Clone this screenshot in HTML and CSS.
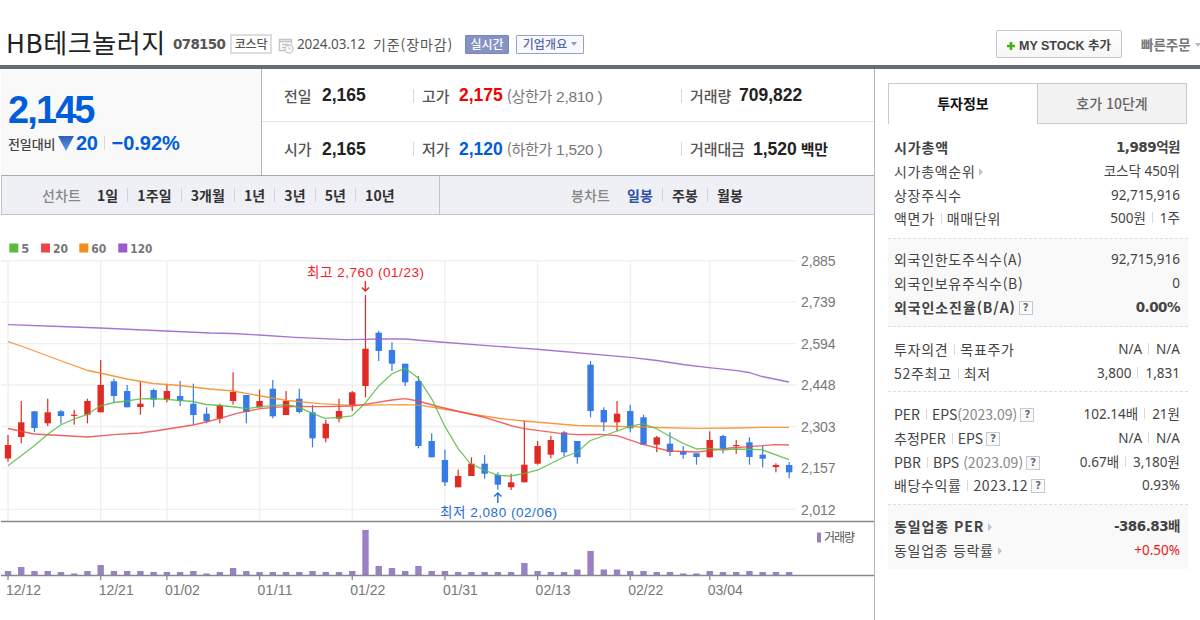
FILE: index.html
```html
<!DOCTYPE html>
<html lang="ko">
<head>
    <meta charset="UTF-8">
    <meta name="viewport" content="width=device-width, initial-scale=1.0">
    <title>HB테크놀러지 : 증권</title>
    <link rel="stylesheet" href="styles.css">
</head>
<body>
    <header>
        <h1>HB테크놀러지</h1>
        <span class="code">078150</span>
        <span class="market">코스닥</span>
        <svg class="time-icon" width="16" height="16" viewBox="0 0 16 16" fill="none" stroke="#c4c4c4">
            <path d="M13.5 6V1.5H1.5v11H7M1.5 3.5h12M4 6.5h6M4 9.5h3" stroke-width="1.4"/>
            <circle cx="11" cy="11" r="4" fill="#fff" stroke-width="1.3"/>
            <path d="M11 8.5V11h2"/>
        </svg>
        <span class="date">2024.03.12</span>
        <span class="basis">기준(장마감)</span>
        <span class="tag realtime">실시간</span>
        <span class="tag outline">기업개요<i class="caret"></i></span>
        <button class="my-stock"><svg width="8" height="8" viewBox="0 0 8 8"><path d="M4 0v8M0 4h8" stroke="#3cb512" stroke-width="2.6"/></svg>MY STOCK 추가</button>
        <a class="quick">빠른주문<i class="caret"></i></a>
    </header>
    <main>
        <section class="left">
            <div class="summary">
                <div class="today">
                    <strong class="price">2,145</strong>
                    <div class="change">
                        <span class="label">전일대비</span>
                        <svg width="16" height="15" viewBox="0 0 16 15">
                            <defs><linearGradient id="down" x2="0" y2="1"><stop offset="0" stop-color="#2e5fae"/><stop offset="1" stop-color="#5b9bea"/></linearGradient></defs>
                            <path d="M0 0h16L8 15z" fill="url(#down)"/>
                        </svg>
                        <b class="diff">20</b><i class="bar"></i><b class="rate">−0.92%</b>
                    </div>
                </div>
                <div class="quotes">
                    <div class="quote-row">
                        <div class="cell"><span class="label">전일</span><b>2,165</b></div>
                        <div class="cell"><i class="bar"></i><span class="label">고가</span><b class="up">2,175</b><span class="limit"><em>(상한가</em> 2,810 )</span></div>
                        <div class="cell"><i class="bar"></i><span class="label vol">거래량</span><b>709,822</b></div>
                    </div>
                    <div class="quote-row">
                        <div class="cell"><span class="label">시가</span><b>2,165</b></div>
                        <div class="cell"><i class="bar"></i><span class="label">저가</span><b class="down">2,120</b><span class="limit"><em>(하한가</em> 1,520 )</span></div>
                        <div class="cell"><i class="bar"></i><span class="label amt">거래대금</span><b>1,520</b><span class="unit">백만</span></div>
                    </div>
                </div>
            </div>
            <nav class="toolbar">
                <div class="line-tabs">
                    <span class="kind">선차트</span>
                    <a>1일</a><a>1주일</a><a>3개월</a><a>1년</a><a>3년</a><a>5년</a><a>10년</a>
                </div>
                <div class="candle-tabs">
                    <span class="kind">봉차트</span>
                    <a class="on">일봉</a><a>주봉</a><a>월봉</a>
                </div>
            </nav>
            <svg id="chart" width="873" height="405" viewBox="1 215 873 405"></svg>
        </section>
        <aside>
            <div class="tabs">
                <a class="tab active">투자정보</a>
                <a class="tab">호가 10단계</a>
            </div>
            <div class="info first">
                <div class="row strong"><span class="name">시가총액</span><span>1,989억원</span></div>
                <div class="row"><span class="name">시가총액순위<i class="arrow"></i></span><span>코스닥 450위</span></div>
                <div class="row"><span class="name">상장주식수</span><span>92,715,916</span></div>
                <div class="row"><span class="name">액면가<i class="bar"></i>매매단위</span><span>500원<i class="bar"></i>1주</span></div>
            </div>
            <div class="info shade foreign">
                <div class="row"><span class="name">외국인한도주식수(A)</span><span>92,715,916</span></div>
                <div class="row"><span class="name">외국인보유주식수(B)</span><span>0</span></div>
                <div class="row strong"><span class="name">외국인소진율(B/A)<i class="help">?</i></span><span>0.00%</span></div>
            </div>
            <div class="info opinion">
                <div class="row"><span class="name">투자의견<i class="bar"></i>목표주가</span><span>N/A<i class="bar"></i>N/A</span></div>
                <div class="row"><span class="name">52주최고<i class="bar"></i>최저</span><span>3,800<i class="bar"></i>1,831</span></div>
            </div>
            <div class="info ratio">
                <div class="row"><span class="name">PER<i class="bar"></i>EPS<em>(2023.09)</em><i class="help">?</i></span><span>102.14배<i class="bar"></i>21원</span></div>
                <div class="row"><span class="name">추정PER<i class="bar"></i>EPS<i class="help">?</i></span><span>N/A<i class="bar"></i>N/A</span></div>
                <div class="row"><span class="name">PBR<i class="bar"></i>BPS <em>(2023.09)</em><i class="help">?</i></span><span>0.67배<i class="bar"></i>3,180원</span></div>
                <div class="row"><span class="name wide">배당수익률<i class="bar"></i>2023.12<i class="help">?</i></span><span>0.93%</span></div>
            </div>
            <div class="info shade industry">
                <div class="row strong"><span class="name">동일업종 PER<i class="arrow"></i></span><span>-386.83배</span></div>
                <div class="row"><span class="name">동일업종 등락률<i class="arrow"></i></span><span class="red">+0.50%</span></div>
            </div>
        </aside>
    </main>
    <script src="chart.js"></script>
</body>
</html>
```
FILE: styles.css
```css
* {
    box-sizing: border-box;
}

body {
    width: 1200px;
    height: 620px;
    margin: 0;
    overflow: hidden;
    background: #fff;
    color: #444;
    font-family: "Noto Sans", "Noto Sans CJK KR", sans-serif;
    font-size: 13px;
}

i, em {
    font-style: normal;
}

header {
    display: flex;
    align-items: center;
    height: 69px;
    padding: 23px 0 0 6px;
    border-bottom: 4px solid #666c75;
    white-space: nowrap;
}

h1 {
    width: 167px;
    margin: -4px 0 0;
    color: #222;
    font: 400 26px/40px "Noto Sans CJK KR", sans-serif;
    letter-spacing: 0.6px;
}

.code {
    width: 57px;
    color: #555;
    font: bold 13.5px "DejaVu Sans", sans-serif;
    letter-spacing: -0.7px;
}

.market {
    width: 42px;
    height: 20px;
    border: 2px solid #ddd;
    color: #555;
    font: 500 12px/15px "Noto Sans CJK KR", sans-serif;
    letter-spacing: -0.2px;
    text-align: center;
}

.time-icon {
    margin: 4px 3px 0 6px;
}

.date {
    width: 76px;
    font-size: 13.5px;
    color: #555;
    letter-spacing: -0.1px;
}

.basis {
    width: 92px;
    font: 14px "Noto Sans CJK KR", sans-serif;
    color: #555;
    letter-spacing: 0.9px;
}

.tag {
    height: 19px;
    border: 1px solid #7787bb;
    border-radius: 1px;
    font: 500 12px/16px "Noto Sans CJK KR", sans-serif;
    text-align: center;
}

.realtime {
    width: 44px;
    margin-right: 7px;
    background: #8592c3;
    color: #fff;
}

.outline {
    width: 68px;
    background: #f8f9ff;
    border: 1px solid #94a1cc;
    color: #5468ac;
    letter-spacing: 0.1px;
}

.caret {
    display: inline-block;
    margin-left: 4px;
    border: 3.5px solid transparent;
    border-top: 4px solid #8e9ccd;
    border-bottom: 0;
    vertical-align: 3px;
}

.my-stock {
    width: 126px;
    height: 28px;
    margin: 0 19px 0 auto;
    padding: 0;
    border: 1px solid #c6c6c6;
    border-radius: 2px;
    background: linear-gradient(#fff, #f6f6f6);
    color: #444;
    font: bold 12.5px "Liberation Sans", "Noto Sans CJK KR", sans-serif;
    letter-spacing: 0;
}

.my-stock svg {
    margin-right: 4px;
}

.quick {
    width: 59px;
    color: #777;
    font: bold 13.5px "Noto Sans CJK KR", sans-serif;
    letter-spacing: 0;
}

.quick .caret {
    border-top-color: #bbb;
    margin-left: 4px;
}

main {
    display: flex;
    height: 551px;
    padding-left: 1px;
}

.left {
    width: 874px;
    border-right: 1px solid #b5b5b5;
}

.summary {
    display: flex;
    height: 106px;
}

.today {
    width: 261px;
    padding: 20px 0 0 7px;
    background: #f9f9f9;
    border-right: 1px solid #b5b5b5;
}

.price {
    display: block;
    height: 42px;
    color: #005ddc;
    font: bold 38px/42px "Liberation Sans", sans-serif;
    letter-spacing: -1.9px;
}

.change {
    display: flex;
    align-items: center;
    height: 24px;
    color: #005ddc;
    font: bold 20px/24px "Liberation Sans", sans-serif;
    letter-spacing: 0;
}

.change .label {
    width: 50px;
    color: #444;
    font: 500 13px "Noto Sans CJK KR", sans-serif;
    letter-spacing: -0.1px;
}

.change .diff {
    margin-left: 2px;
    letter-spacing: -0.4px;
}

.change .bar {
    margin: 0 6px 0 7px;
}

.bar {
    display: inline-block;
    flex: none;
    width: 1px;
    height: 14px;
    background: #d9d9d9;
}

.quotes {
    flex: 1;
}

.quote-row {
    display: grid;
    grid-template-columns: 129px 268px 1fr;
    height: 53px;
    padding: 1px 0 0 22px;
    border-bottom: 1px solid #e5e5e5;
}

.quote-row:last-child {
    border-bottom: 0;
}

.cell {
    display: flex;
    align-items: center;
    color: #222;
    font: bold 17.5px "Liberation Sans", sans-serif;
    white-space: nowrap;
}

.cell .bar {
    margin-right: 8px;
}

.cell .label {
    width: 37px;
    color: #555;
    font: 500 15px/20px "Noto Sans CJK KR", sans-serif;
    letter-spacing: -0.1px;
}

.cell:first-child .label {
    width: 38px;
}

.cell .vol {
    width: 49px;
}

.cell .amt {
    width: 63px;
}

.up {
    color: #f30000;
}

.down {
    color: #005ddc;
}

.cell .limit {
    margin-left: 4px;
    color: #777;
    font: 15.5px "Liberation Sans", "Noto Sans CJK KR", sans-serif;
    letter-spacing: -0.3px;
}

.limit em {
    font: 15px/20px "Noto Sans CJK KR", sans-serif;
    letter-spacing: -0.3px;
}

.unit {
    margin-left: 4px;
    font: bold 15px/20px "Noto Sans CJK KR", sans-serif;
    letter-spacing: -0.3px;
}

.toolbar {
    display: flex;
    height: 40px;
    border: 1px solid #c4c4c8;
    border-top-color: #a9a9a9;
    border-right: 0;
    background: #eff0f5;
    color: #333;
    font: bold 14px/38px "Noto Sans CJK KR", sans-serif;
    letter-spacing: 0.1px;
}

.line-tabs, .candle-tabs {
    display: flex;
    align-items: center;
}

.line-tabs {
    width: 438px;
    padding-left: 40px;
    border-right: 1px solid #c4c4c8;
}

.candle-tabs {
    padding-left: 131px;
}

.kind {
    width: 46px;
    color: #888;
    font-weight: 500;
}

.toolbar a {
    display: flex;
    align-items: center;
    padding: 0 9px;
}

.toolbar a + a::before {
    content: "";
    width: 1px;
    height: 14px;
    margin: 0 9px 0 -9px;
    background: #d0d2d9;
}

.toolbar .on {
    color: #3150a8;
}

.candle-tabs .on {
    padding-left: 10px;
}

#chart {
    display: block;
}

aside {
    width: 313px;
    padding: 14px 0 0 13px;
}

.tabs {
    display: flex;
    height: 41px;
}

.tab {
    width: 149px;
    border: 1px solid #c9c9c9;
    border-right: 0;
    border-bottom: 0;
    color: #111;
    font: bold 14px/38px "Noto Sans CJK KR", sans-serif;
    letter-spacing: 0;
    text-align: center;
}

.tab + .tab {
    width: 150px;
    border: 1px solid #c9c9c9;
    background: #f2f2f2;
    color: #666;
    font-weight: 500;
}

.info {
    width: 300px;
    padding: 11px 8px 7px 6px;
    border-bottom: 1px dashed #ddd;
}

.first {
    height: 115px;
    padding-top: 12px;
}

.foreign {
    height: 88px;
    padding-top: 9px;
}

.opinion {
    height: 65px;
}

.ratio {
    height: 113px;
}

.industry {
    height: 64px;
    padding-top: 10px;
    border-bottom: 0;
}

.shade {
    background: #f9f9f9;
}

.row {
    display: flex;
    justify-content: space-between;
    height: 23.8px;
    font-size: 13.5px;
    line-height: 23px;
    white-space: nowrap;
}

.name {
    font-family: "Noto Sans CJK KR", sans-serif;
    font-size: 14px;
    line-height: 22px;
    letter-spacing: 0.7px;
}

.row .bar {
    height: 11px;
    margin: 0 7px 0 6px;
}

.row .name .bar {
    margin: 0 5px 0 6px;
}

.ratio .name {
    letter-spacing: 0;
}

.ratio .wide {
    letter-spacing: 0.6px;
}

.strong {
    font: bold 13.5px/22px "DejaVu Sans", "Noto Sans CJK KR", sans-serif;
    letter-spacing: -0.5px;
}

.strong .name {
    letter-spacing: 0.9px;
}

.name em {
    color: #888;
}

.arrow {
    display: inline-block;
    margin-left: 4px;
    border: 4px solid transparent;
    border-left: 4px solid #c4c4c4;
    border-right: 0;
    vertical-align: 1px;
}

.help {
    display: inline-block;
    width: 14px;
    height: 14px;
    margin-left: 3px;
    border: 1px solid #c4c8cf;
    background: #fafafa;
    color: #5e6b7e;
    font: bold 10px/12px "DejaVu Sans", sans-serif;
    letter-spacing: 0;
    text-align: center;
    vertical-align: 2px;
}

.red {
    color: #f01414;
}

/* chart */
.grid line {
    stroke: #f0f0f0;
    stroke-width: 1.4;
}

.axis {
    stroke: #84888d;
    stroke-width: 1.3;
}

.scale text {
    fill: #777;
    font: 14px "Liberation Sans", sans-serif;
}

.legend text {
    fill: #777;
    font: bold 12px "DejaVu Sans", sans-serif;
}

.note {
    font: 13.5px "Liberation Sans", "Noto Sans CJK KR", sans-serif;
}

.volume-label {
    fill: #555;
    font: 12px "Noto Sans CJK KR", sans-serif;
}

polyline {
    fill: none;
    stroke-width: 1.3;
    opacity: 0.85;
}
```
FILE: chart.js
```js
// body top, body bottom, high, low, 1 = up / 0 = down, volume
const days = [
    [445, 458.5, 435, 461.7, 1, 4], [422.3, 437, 401, 443.3, 1, 8], [411.3, 428, 411.3, 432, 0, 4],
    [412.3, 423.3, 398.7, 426, 1, 4], [411.3, 416, 410, 423.7, 0, 3], [414.7, 415.9, 410, 424.7, 1, 1.5],
    [401, 414.7, 398.7, 423.3, 1, 4], [385, 412.3, 360, 412.3, 1, 10], [381.3, 396, 378.7, 402.7, 0, 4],
    [391, 407.3, 385, 407.3, 0, 4], [403.7, 407, 381, 414.7, 1, 4], [390, 399.7, 388.7, 407.3, 0, 3],
    [391, 399.7, 383.7, 402.3, 1, 3], [396, 401, 381, 406, 0, 3], [403.7, 415, 383.7, 424.7, 0, 4],
    [413.7, 421.3, 407.3, 423.3, 0, 1.5], [405, 418.7, 403.7, 423.3, 1, 3], [392, 401, 372.3, 404.7, 1, 7],
    [395, 412, 395, 423.3, 0, 4], [401, 407.3, 389.7, 407.3, 1, 3], [388.7, 416.3, 380, 418.3, 0, 3],
    [401, 415, 391, 415, 1, 3], [398.7, 412, 388.7, 413.3, 0, 3], [412.3, 438.3, 405, 447.3, 0, 4],
    [423.7, 438.3, 419.7, 442.3, 1, 3], [411, 418.7, 398.7, 422.3, 1, 3], [392.3, 405, 391, 411, 1, 4],
    [348.7, 386, 295, 397.3, 1, 45], [332.7, 351, 331, 361, 0, 9], [350, 363.7, 342.3, 371, 0, 7],
    [363.7, 382.3, 363.7, 386, 0, 4], [381, 446, 376, 448.3, 0, 9], [441, 457.3, 433.3, 457.3, 0, 4],
    [460, 482.3, 449.7, 486, 0, 4], [476, 487.3, 469.7, 487.3, 1, 3], [463.7, 476, 457.3, 476, 1, 3],
    [463.7, 473.7, 455, 478.7, 0, 3], [474.7, 484.7, 472.3, 489.7, 0, 3], [482.3, 487.3, 473.7, 490, 1, 3],
    [464.7, 482.3, 420.7, 482.3, 1, 12], [446, 463.7, 441, 464.7, 1, 4], [440, 454.7, 436, 458.3, 1, 3],
    [432.3, 452.3, 431, 456.3, 0, 3], [441, 457.3, 441, 463.7, 0, 5.5], [364.7, 411, 361, 417.3, 0, 24],
    [410, 422.3, 407.3, 431, 0, 5.5], [413.7, 422.3, 401, 431, 1, 5.5], [411, 428.3, 404.7, 432.3, 0, 4],
    [417.3, 444.7, 414.7, 444.7, 0, 4], [437.3, 444.7, 436, 452.3, 1, 3], [443.7, 452, 432.3, 456, 0, 3],
    [451, 454.7, 446, 458.7, 0, 1.5], [453.3, 457, 453.3, 464.7, 0, 1.5], [440, 457.3, 431.3, 457.3, 1, 4],
    [436, 448.7, 434.7, 453.3, 0, 3], [445, 446.2, 440, 453.7, 1, 3], [442.3, 457, 437.3, 464.7, 0, 4],
    [454.7, 458.7, 446, 467.3, 0, 3], [465, 467, 463.3, 472.3, 1, 3], [465, 472.3, 462.3, 478.3, 0, 3]
];

const averages = [
    ['#9a5bcb', '8,324.7 60,326.5 100,328 166,331 210,333 233,333.5 259,335 295,337.3 345,339.7 365,339.3 378,339 405,339 440,342 497,346.3 540,349.5 630,357.3 657,360.5 683,364.5 709,367.7 737,370.7 749,372.5 762,376.5 789,382'],
    ['#f58a1f', '8,341.7 21,346 61.5,361 88,370.5 100,373 127,379 153,383.5 180,385.5 210,389 233,391 258,395.5 287,400.5 320,403.7 352,405.3 405,404.7 423,405.7 440,408.5 458,411.5 471,414 500,418.5 524,421 577,425.5 630,426.7 657,427.5 697,428.3 735,428 762,427.3 789,427.3'],
    ['#ee4646', '8,428.5 34,434 61,435.5 88,437 114,434.7 140,433 155,431 193,425 206,422 220,418.3 237,413.3 250,410.7 260,408.7 287,406.3 323,406.7 352,406 365,404.3 392,400 405,398.7 418,401 440,407 457,411 483,417 510,425.3 524,428.7 560,433.3 577,434.7 600,434.3 617,435.7 643,444.3 669,451 697,452 709,450.7 730,448 749,446.7 775,444.7 789,445'],
    ['#57bd40', '8,465.7 34,446 48,434 61,424.7 75,418.7 87,414.7 100,406 114,402.5 127,401 140,398.8 153,398.5 166,399.3 193,401.5 206,404.5 220,405.5 235,407 247,408.7 260,406.7 287,404.7 299,407.3 313,413.7 325,418.3 339,417.3 352,416 365,403.3 379,385.7 392,373.7 405,368.3 418,377.7 432,399.3 445,426.7 458,448.3 470,463.3 484,470 498,475.3 510,476 524,473.7 538,470 564,457 577,452.3 590,440.7 617,431 630,426.3 643,423.7 657,429 669,435.7 683,443.3 697,449 709,448.3 723,450 735,449 762,449.7 789,459.7']
];

const x = i => 8 + i * 13.24;
let svg = '<g class="grid">';
const prices = ['2,885', '2,739', '2,594', '2,448', '2,303', '2,157', '2,012'];
const dates = [[0, '12/12'], [7, '12/21'], [12, '01/02'], [19, '01/11'], [26, '01/22'], [33, '01/31'], [40, '02/13'], [47, '02/22'], [53, '03/04']];

prices.forEach((p, i) => {
    const y = 260.7 + i * 41.45;
    svg += `<line x1="1" x2="796" y1="${y}" y2="${y}"/>`;
});
dates.forEach(d => {
    svg += `<line x1="${x(d[0])}" x2="${x(d[0])}" y1="261" y2="521"/>`;
});
svg += '</g><g class="scale">';
prices.forEach((p, i) => {
    svg += `<text x="801" y="${266 + i * 41.45}" textLength="34.5">${p}</text>`;
});
dates.forEach(d => {
    svg += `<text x="${x(d[0]) - 2}" y="595" textLength="35">${d[1]}</text>`;
});
svg += '</g>';

days.forEach((d, i) => {
    const color = d[4] ? '#e02b24' : '#377ce5';
    svg += `<rect x="${x(i) - 0.6}" y="${d[2]}" width="1.2" height="${d[3] - d[2]}" fill="${color}"/>`;
    svg += `<rect x="${x(i) - 3.2}" y="${d[0]}" width="6.4" height="${d[1] - d[0]}" fill="${color}"/>`;
    svg += `<rect x="${x(i) - 3.2}" y="${575 - d[5]}" width="6.4" height="${d[5]}" fill="#9a80c4"/>`;
});
averages.forEach(a => {
    svg += `<polyline points="${a[1]}" stroke="${a[0]}"/>`;
});

svg += '<path class="axis" d="M1 521.5H874M1 575.5H874"/>';
dates.forEach(d => {
    svg += `<path class="axis" d="M${x(d[0])} 575v5"/>`;
});

svg += '<g class="legend">';
[[9.3, '#57bd40', '5', 8], [41, '#ee4646', '20', 15], [79.3, '#f58a1f', '60', 15], [118.3, '#9a5bcb', '120', 22]].forEach(l => {
    svg += `<rect x="${l[0]}" y="243.5" width="9" height="9" fill="${l[1]}"/>`;
    svg += `<text x="${l[0] + 12}" y="252.5" textLength="${l[3]}" lengthAdjust="spacingAndGlyphs">${l[2]}</text>`;
});
svg += '</g>';

svg += '<text class="note" x="307" y="277" fill="#f01e28" textLength="117">최고 2,760 (01/23)</text>';
svg += '<path d="M365.4 281v10M361.8 287.5l3.6 3.5 3.6-3.5" fill="none" stroke="#e02b24" stroke-width="1.4"/>';
svg += '<text class="note" x="440" y="517" fill="#1f6fd6" textLength="117">최저 2,080 (02/06)</text>';
svg += '<path d="M497.8 503v-10M494.2 496.5l3.6-3.5 3.6 3.5" fill="none" stroke="#1f6fd6" stroke-width="1.4"/>';
svg += '<rect x="817" y="532.5" width="4" height="10" fill="#9a80c4"/>';
svg += '<text class="volume-label" x="824" y="542" textLength="31">거래량</text>';

document.getElementById('chart').innerHTML = svg;
```
